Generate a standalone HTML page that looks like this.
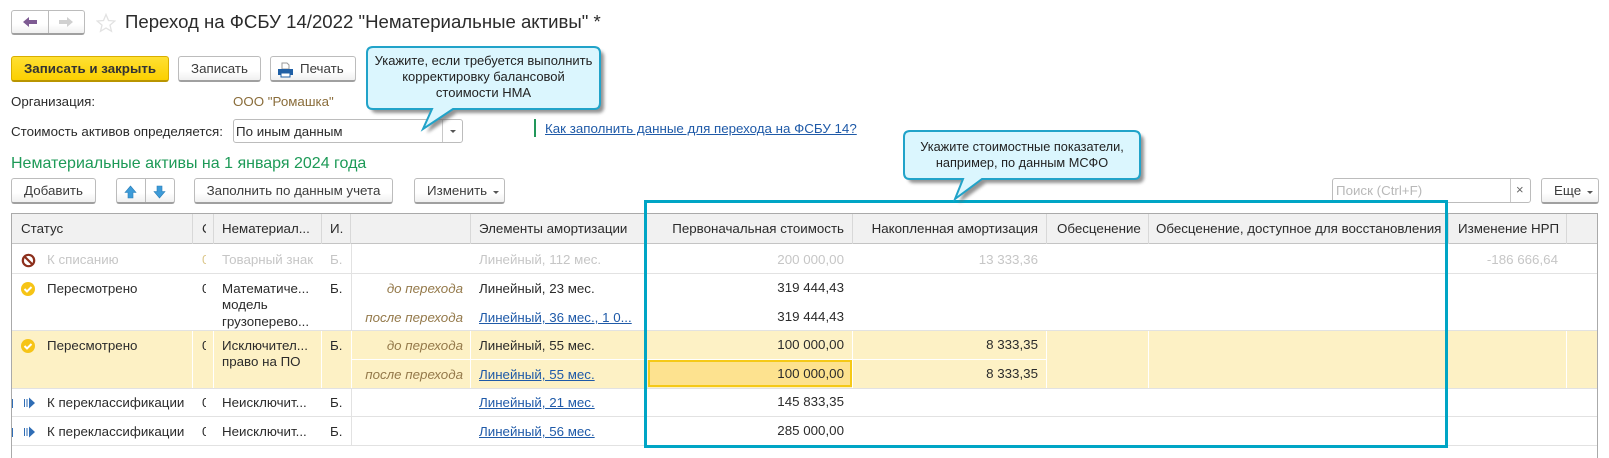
<!DOCTYPE html>
<html lang="ru"><head><meta charset="utf-8"><title>Переход на ФСБУ</title>
<style>
html,body{margin:0;padding:0;background:#fff}
#p{position:relative;width:1609px;height:458px;overflow:hidden;background:#fff;font-family:"Liberation Sans",Arial,sans-serif;font-size:13.33px;color:#2b2b2b}
#p div,#p span.t,#p a{position:absolute;white-space:nowrap}
.t{line-height:16px;height:16px}
.btn{box-sizing:border-box;border:1px solid #bcbcbc;border-bottom:2px solid #a0a0a0;border-radius:3px;background:linear-gradient(#fff 60%,#f0f0f0);text-align:center;line-height:24px;font-size:13.33px;color:#3c3c3c}
.r{text-align:right}
.g{color:#c6c6c6}
.i{font-style:italic;color:#94794a;text-align:right;width:140px;left:323px}
.l{color:#1f5aa8;text-decoration:underline}
.h{background:#d8d8d8;width:1px;top:214px;height:30px}
</style></head><body><div id="p">

<!-- nav -->
<div class="btn" style="left:11px;top:10px;width:74px;height:25px"></div>
<div style="left:48px;top:11px;width:1px;height:22px;background:#bbb"></div>
<svg style="position:absolute;left:22px;top:15px" width="60" height="14"><path d="M1 7l6-5v3h8v4H7v3z" fill="#7d5a92"/><path d="M37 5h8V2l6 5-6 5V9h-8z" fill="#d0d0d0"/></svg>
<svg style="position:absolute;left:96px;top:13px" width="20" height="20"><path d="M10 1.500l2.500 6 6.300.5-4.800 4.100 1.500 6.200L10 15l-5.500 3.300 1.500-6.200L1.200 8l6.300-.5z" fill="#fff" stroke="#e2e2e2" stroke-width="1.300"/></svg>
<span class="t" style="left:125px;top:11px;font-size:18.6px;line-height:22px;height:22px;color:#2b2b2b">Переход на ФСБУ 14/2022 "Нематериальные активы" *</span>

<!-- action buttons -->
<div class="btn" style="left:11px;top:56px;width:158px;height:26px;background:linear-gradient(#ffe033,#fbd000);border-color:#d8ae00;border-bottom-color:#b99500;color:#333;font-weight:bold">Записать и закрыть</div>
<div class="btn" style="left:178px;top:56px;width:83px;height:26px">Записать</div>
<div class="btn" style="left:270px;top:56px;width:86px;height:26px;text-align:left;padding-left:29px">Печать</div>
<svg style="position:absolute;left:277px;top:62px" width="17" height="16"><path d="M5 1h5l2 2v4H5z" fill="#fff" stroke="#9a9a9a"/><path d="M1 7h15v6h-3v-2H4v2H1z" fill="#1f5fa5"/><rect x="4" y="11" width="9" height="4" fill="#fff" stroke="#1f5fa5"/></svg>

<span class="t" style="left:11px;top:94px">Организация:</span>
<span class="t" style="left:233px;top:94px;color:#8a6d3b">ООО "Ромашка"</span>
<span class="t" style="left:11px;top:124px">Стоимость активов определяется:</span>
<div style="left:233px;top:119px;width:230px;height:24px;border:1px solid #bcbcbc;border-radius:3px;box-sizing:border-box"></div>
<div style="left:442px;top:120px;width:1px;height:22px;background:#c8c8c8"></div>
<div style="left:450px;top:130px;width:0;height:0;border:3px solid transparent;border-top:3px solid #555"></div>
<span class="t" style="left:236px;top:124px">По иным данным</span>

<div style="left:534px;top:119px;width:2px;height:18px;background:#22975a"></div>
<a class="t l" style="left:545px;top:121px">Как заполнить данные для перехода на ФСБУ 14?</a>

<span class="t" style="left:11px;top:155px;font-size:16px;line-height:18px;height:18px;color:#1d9a57">Нематериальные активы на 1 января 2024 года</span>

<!-- toolbar -->
<div class="btn" style="left:11px;top:178px;width:85px;height:26px">Добавить</div>
<div class="btn" style="left:116px;top:178px;width:59px;height:26px"></div>
<div style="left:145px;top:179px;width:1px;height:23px;background:#bbb"></div>
<svg style="position:absolute;left:123px;top:185px" width="46" height="15"><path d="M7.500 1l5.500 6.500H10V13H5V7.500H2z" fill="#3d9bd8" stroke="#2b7fb8" stroke-width=".6"/><path d="M34 1h5v5.500h3L36.500 13 31 6.500h3z" fill="#3d9bd8" stroke="#2b7fb8" stroke-width=".6"/></svg>
<div class="btn" style="left:194px;top:178px;width:199px;height:26px">Заполнить по данным учета</div>
<div class="btn" style="left:414px;top:178px;width:91px;height:26px;text-align:left;padding-left:12px">Изменить</div>
<div style="left:493px;top:191px;width:0;height:0;border:3px solid transparent;border-top:3px solid #555"></div>

<div style="left:1332px;top:178px;width:199px;height:25px;box-sizing:border-box;border:1px solid #bcbcbc;border-radius:3px"></div>
<div style="left:1510px;top:179px;width:1px;height:23px;background:#c8c8c8"></div>
<span class="t" style="left:1336px;top:183px;color:#b8b8b8">Поиск (Ctrl+F)</span>
<span class="t" style="left:1516px;top:182px;color:#666;font-size:13px">×</span>
<div class="btn" style="left:1541px;top:178px;width:58px;height:26px;text-align:left;padding-left:12px">Еще</div>
<div style="left:1587px;top:191px;width:0;height:0;border:3px solid transparent;border-top:3px solid #555"></div>

<!-- table -->
<div style="left:11px;top:213px;width:1587px;height:245px;border:1px solid #aaa;border-bottom:0;box-sizing:border-box"></div>
<div style="left:12px;top:214px;width:1585px;height:30px;background:#f1f1f1;border-bottom:1px solid #c4c4c4;box-sizing:border-box"></div>
<div style="left:12px;top:331px;width:1585px;height:57px;background:#fdf1c5"></div>
<div class="h" style="left:192px"></div><div class="h" style="left:213px"></div><div class="h" style="left:321px"></div><div class="h" style="left:350px"></div><div class="h" style="left:470px"></div><div class="h" style="left:852px"></div><div class="h" style="left:1046px"></div><div class="h" style="left:1148px"></div><div class="h" style="left:1448px"></div><div class="h" style="left:1566px"></div>

<div style="left:12px;top:273px;width:1585px;height:1px;background:#e2e2e2"></div>
<div style="left:12px;top:330px;width:1585px;height:1px;background:#e2e2e2"></div>
<div style="left:12px;top:388px;width:1585px;height:1px;background:#e2e2e2"></div>
<div style="left:12px;top:416px;width:1585px;height:1px;background:#e2e2e2"></div>
<div style="left:12px;top:445px;width:1585px;height:1px;background:#e2e2e2"></div>
<div style="left:351px;top:244px;width:1px;height:202px;background:#e2e2e2"></div>

<div style="left:192px;top:331px;width:1px;height:57px;background:#fff"></div>
<div style="left:213px;top:331px;width:1px;height:57px;background:#fff"></div>
<div style="left:321px;top:331px;width:1px;height:57px;background:#fff"></div>
<div style="left:351px;top:331px;width:1px;height:57px;background:#fff"></div>
<div style="left:470px;top:331px;width:1px;height:57px;background:#fff"></div>
<div style="left:852px;top:331px;width:1px;height:57px;background:#fff"></div>
<div style="left:1046px;top:331px;width:1px;height:57px;background:#fff"></div>
<div style="left:1148px;top:331px;width:1px;height:57px;background:#fff"></div>
<div style="left:1566px;top:331px;width:1px;height:57px;background:#fff"></div>
<div style="left:352px;top:359px;width:695px;height:1px;background:#fff"></div>
<div style="left:648px;top:360px;width:204px;height:27px;box-sizing:border-box;background:#fde28f;border:2px solid #f5c917"></div>

<!-- header text -->
<span class="t" style="left:21px;top:221px">Статус</span>
<span class="t" style="left:202px;top:221px;width:4px;overflow:hidden">С</span>
<span class="t" style="left:222px;top:221px">Нематериал...</span>
<span class="t" style="left:330px;top:221px">И.</span>
<span class="t" style="left:479px;top:221px">Элементы амортизации</span>
<span class="t r" style="left:644px;width:200px;top:221px">Первоначальная стоимость</span>
<span class="t r" style="left:858px;width:180px;top:221px">Накопленная амортизация</span>
<span class="t" style="left:1057px;top:221px">Обесценение</span>
<span class="t" style="left:1156px;top:221px">Обесценение, доступное для восстановления</span>
<span class="t" style="left:1458px;top:221px">Изменение НРП</span>

<!-- row 1 -->
<svg style="position:absolute;left:21px;top:253px" width="15" height="15"><circle cx="7.500" cy="7.500" r="5.700" fill="#fff" stroke="#8c2f1c" stroke-width="2.200"/><path d="M3.500 3.500l8 8" stroke="#8c2f1c" stroke-width="2.200"/></svg>
<span class="t g" style="left:47px;top:252px">К списанию</span>
<span class="t g" style="left:202px;top:252px;width:4px;overflow:hidden;color:#dcc88c">0</span>
<span class="t g" style="left:222px;top:252px">Товарный знак</span>
<span class="t g" style="left:330px;top:252px">Б.</span>
<span class="t g" style="left:479px;top:252px">Линейный, 112 мес.</span>
<span class="t r g" style="left:644px;width:200px;top:252px">200 000,00</span>
<span class="t r g" style="left:858px;width:180px;top:252px">13 333,36</span>
<span class="t r g" style="left:1458px;width:100px;top:252px">-186 666,64</span>

<!-- row 2 -->
<svg style="position:absolute;left:21px;top:282px" width="15" height="15"><circle cx="7" cy="7" r="7" fill="#f6c416"/><path d="M3.500 7l2.500 2.500 4.500-4.500" fill="none" stroke="#fff" stroke-width="2"/></svg>
<span class="t" style="left:47px;top:281px">Пересмотрено</span>
<span class="t" style="left:202px;top:281px;width:4px;overflow:hidden">0</span>
<span class="t" style="left:222px;top:281px">Математиче...</span>
<span class="t" style="left:222px;top:297px">модель</span>
<span class="t" style="left:222px;top:314px">грузоперево...</span>
<span class="t" style="left:330px;top:281px">Б.</span>
<span class="t i" style="top:281px">до перехода</span>
<span class="t i" style="top:310px">после перехода</span>
<span class="t" style="left:479px;top:281px">Линейный, 23 мес.</span>
<a class="t l" style="left:479px;top:310px">Линейный, 36 мес., 1 0...</a>
<span class="t r" style="left:644px;width:200px;top:280px">319 444,43</span>
<span class="t r" style="left:644px;width:200px;top:309px">319 444,43</span>

<!-- row 3 -->
<svg style="position:absolute;left:21px;top:339px" width="15" height="15"><circle cx="7" cy="7" r="7" fill="#f6c416"/><path d="M3.500 7l2.500 2.500 4.500-4.500" fill="none" stroke="#fff" stroke-width="2"/></svg>
<span class="t" style="left:47px;top:338px">Пересмотрено</span>
<span class="t" style="left:202px;top:338px;width:4px;overflow:hidden">0</span>
<span class="t" style="left:222px;top:338px">Исключител...</span>
<span class="t" style="left:222px;top:354px">право на ПО</span>
<span class="t" style="left:330px;top:338px">Б.</span>
<span class="t i" style="top:338px">до перехода</span>
<span class="t i" style="top:367px">после перехода</span>
<span class="t" style="left:479px;top:338px">Линейный, 55 мес.</span>
<a class="t l" style="left:479px;top:367px">Линейный, 55 мес.</a>
<span class="t r" style="left:644px;width:200px;top:337px">100 000,00</span>
<span class="t r" style="left:644px;width:200px;top:366px">100 000,00</span>
<span class="t r" style="left:858px;width:180px;top:337px">8 333,35</span>
<span class="t r" style="left:858px;width:180px;top:366px">8 333,35</span>

<!-- row 4,5 -->
<svg style="position:absolute;left:11px;top:396px" width="26" height="14"><path d="M1 3h1v9H1M13 3h1v8h-1M15.500 3h1v8h-1M18 1.500L24 7l-6 5.500z" fill="#2f6db5"/></svg>
<span class="t" style="left:47px;top:395px">К переклассификации</span>
<span class="t" style="left:202px;top:395px;width:4px;overflow:hidden">0</span>
<span class="t" style="left:222px;top:395px">Неисключит...</span>
<span class="t" style="left:330px;top:395px">Б.</span>
<a class="t l" style="left:479px;top:395px">Линейный, 21 мес.</a>
<span class="t r" style="left:644px;width:200px;top:394px">145 833,35</span>

<svg style="position:absolute;left:11px;top:425px" width="26" height="14"><path d="M1 3h1v9H1M13 3h1v8h-1M15.500 3h1v8h-1M18 1.500L24 7l-6 5.500z" fill="#2f6db5"/></svg>
<span class="t" style="left:47px;top:424px">К переклассификации</span>
<span class="t" style="left:202px;top:424px;width:4px;overflow:hidden">0</span>
<span class="t" style="left:222px;top:424px">Неисключит...</span>
<span class="t" style="left:330px;top:424px">Б.</span>
<a class="t l" style="left:479px;top:424px">Линейный, 56 мес.</a>
<span class="t r" style="left:644px;width:200px;top:423px">285 000,00</span>

<!-- teal frame -->
<div style="left:644px;top:200px;width:804px;height:248px;box-sizing:border-box;border:3px solid #00a5c5"></div>

<!-- callouts -->
<svg style="position:absolute;left:360px;top:40px" width="256" height="100"><defs><filter id="b" x="-10%" y="-10%" width="120%" height="130%"><feGaussianBlur stdDeviation="1.500"/></filter></defs>
<path d="M13 7h221q6 0 6 6v50q0 6-6 6H93L63 89l9-20H13q-6 0-6-6V13q0-6 6-6z" transform="translate(4 4)" fill="#666" opacity=".7" filter="url(#b)"/>
<path d="M13 7h221q6 0 6 6v50q0 6-6 6H93L63 89l9-20H13q-6 0-6-6V13q0-6 6-6z" fill="#dbf6fe" stroke="#21a3c9" stroke-width="2"/></svg>
<div style="left:367px;top:53px;width:233px;text-align:center;font-size:13px;line-height:16px;color:#222;white-space:normal">Укажите, если требуется выполнить<br>корректировку балансовой<br>стоимости НМА</div>

<svg style="position:absolute;left:897px;top:124px" width="256" height="84"><path d="M13 7h224q6 0 6 6v36q0 6-6 6H85L58 75l8-20H13q-6 0-6-6V13q0-6 6-6z" transform="translate(4 4)" fill="#666" opacity=".7" filter="url(#b)"/>
<path d="M13 7h224q6 0 6 6v36q0 6-6 6H85L58 75l8-20H13q-6 0-6-6V13q0-6 6-6z" fill="#dbf6fe" stroke="#21a3c9" stroke-width="2"/></svg>
<div style="left:904px;top:139px;width:236px;text-align:center;font-size:12.75px;line-height:16px;color:#222;white-space:normal">Укажите стоимостные показатели,<br>например, по данным МСФО</div>

</div></body></html>
